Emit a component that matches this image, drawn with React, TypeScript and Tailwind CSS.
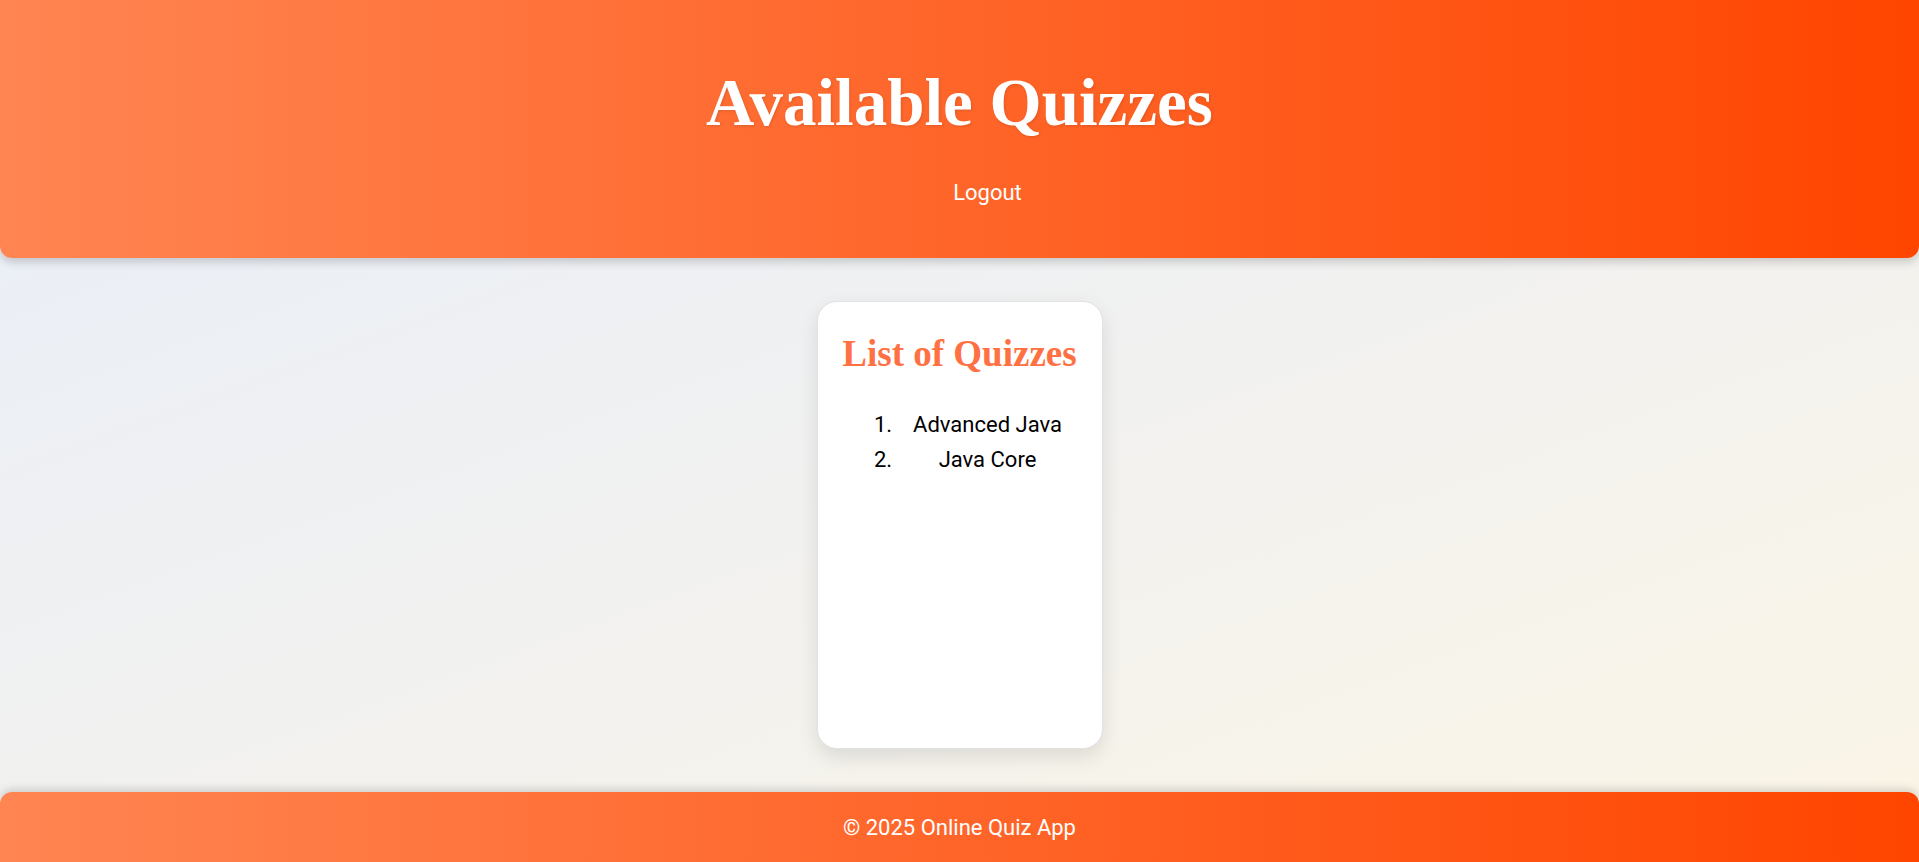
import React from "react";

const quizzes = ["Advanced Java", "Java Core"];

const serif = { fontFamily: '"Liberation Serif", "Times New Roman", serif' };

export default function App() {
  return (
    <div className="flex min-h-screen flex-col bg-[linear-gradient(160deg,#e8eef9_0%,#f1f1f0_50%,#fbf5e6_100%)] font-['Roboto',sans-serif]">
      {/* Header */}
      <header className="flex h-[258px] flex-col items-center rounded-b-[12px] bg-[linear-gradient(90deg,#ff8552_0%,#ff4500_100%)] pt-[69px] text-white shadow-[0_4px_10px_rgba(0,0,0,0.18)]">
        <h1 className="text-[67px] font-bold leading-none [text-shadow:1px_1px_3px_rgba(0,0,0,0.12)]" style={serif}>
          Available Quizzes
        </h1>
        <nav className="mt-[46px] pl-[56px]">
          <a href="#" className="block text-[22px] leading-none text-white">
            Logout
          </a>
        </nav>
      </header>

      {/* Main */}
      <main className="flex flex-1 justify-center py-[43px]">
        <div className="flex h-[448px] w-[286px] flex-col items-center rounded-[20px] border border-[#e2e2e2] bg-white px-6 pt-[33px] shadow-[0_8px_20px_rgba(0,0,0,0.1)]">
          <h2 className="text-[37px] font-bold leading-none text-[#ff7043]" style={serif}>
            List of Quizzes
          </h2>
          <ol className="mt-[40px] flex w-full list-decimal flex-col gap-[9px] pl-[56px] text-[22px] text-black">
            {quizzes.map((q) => (
              <li key={q} className="text-center leading-[26px]">
                {q}
              </li>
            ))}
          </ol>
        </div>
      </main>

      {/* Footer */}
      <footer className="flex h-[70px] items-center justify-center rounded-t-[12px] bg-[linear-gradient(90deg,#ff8552_0%,#ff4500_100%)] text-[22px] text-white shadow-[0_-3px_8px_rgba(0,0,0,0.15)]">
        © 2025 Online Quiz App
      </footer>
    </div>
  );
}
